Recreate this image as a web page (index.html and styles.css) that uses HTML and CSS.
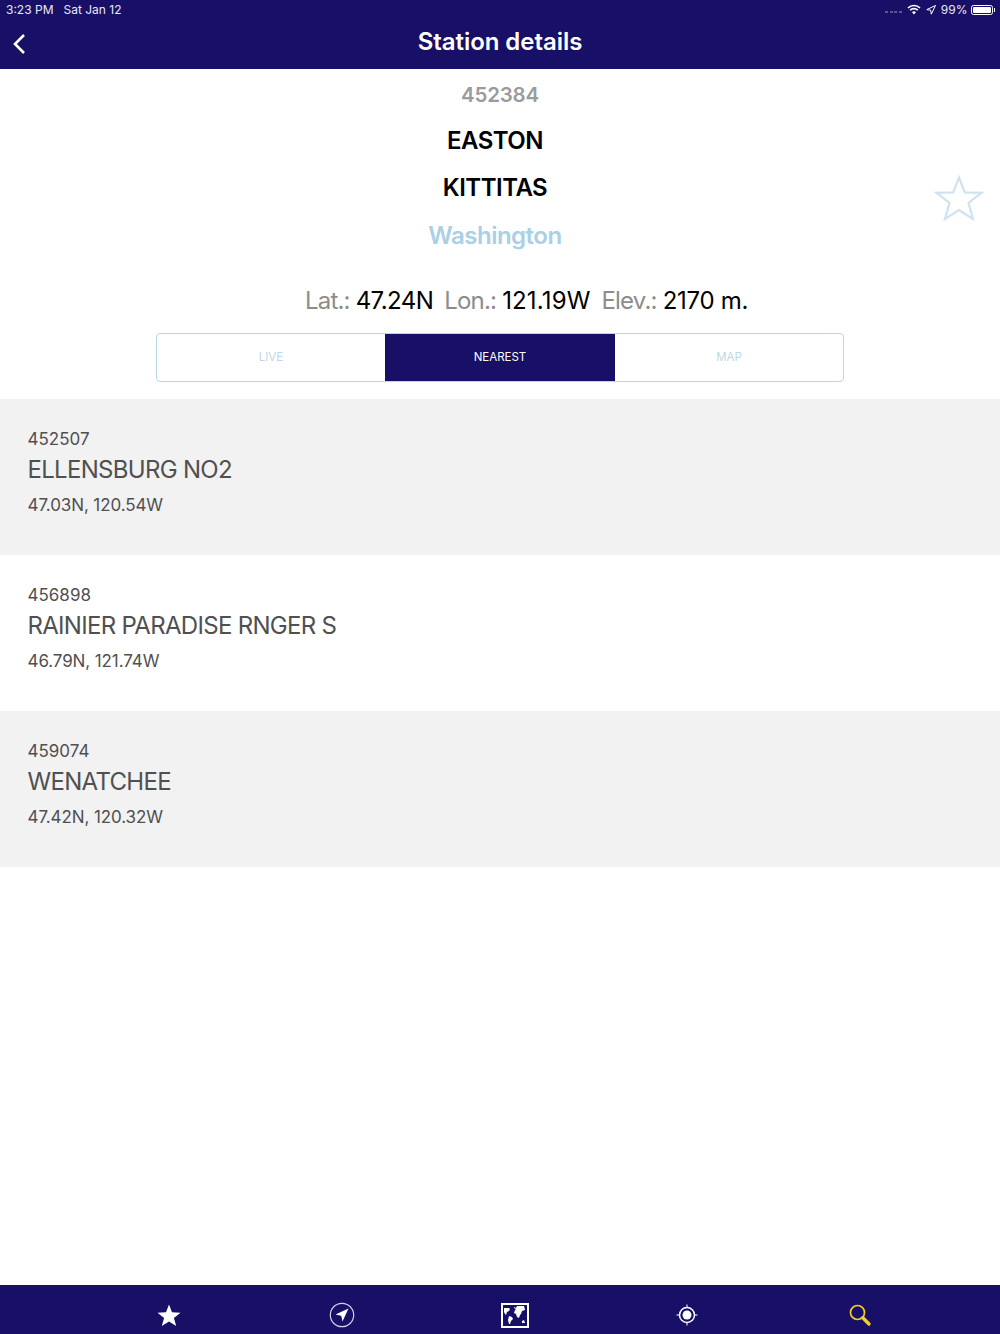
FILE: index.html
```html
<!DOCTYPE html>
<html lang="en">
<head>
<meta charset="utf-8">
<title>Station details</title>
<link rel="stylesheet" href="styles.css">
</head>
<body>
<div class="app">
  <header class="header">
    <div class="status">
      <div class="status-left"><span>3:23 PM</span><span>Sat Jan 12</span></div>
      <div class="status-right">
        <span class="signal"><i></i><i></i><i></i><i></i></span>
        <svg class="wifi" width="14" height="11" viewBox="0 0 14 11"><path d="M1 4a8.500 8.500 0 0 1 12 0M3.200 6.200a5.400 5.400 0 0 1 7.600 0" fill="none" stroke="#fff" stroke-width="1.700"/><path d="M5 8.200a2.800 2.800 0 0 1 4 0L7 10.400z" fill="#fff"/></svg>
        <svg class="loc" width="10" height="10" viewBox="0 0 10 10"><path d="M9.500.5 .8 4.600l3.900.6.6 4z" fill="none" stroke="#fff" stroke-width="1"/></svg>
        <span class="pct">99%</span>
        <span class="battery"><span class="battery-fill"></span></span><span class="battery-cap"></span>
      </div>
    </div>
    <div class="nav">
      <svg class="back" width="14" height="22" viewBox="0 0 14 22"><path d="M12 2 3 11l9 9" fill="none" stroke="#fff" stroke-width="2.600"/></svg>
      <h1 class="title">Station details</h1>
    </div>
  </header>

  <main class="main">
    <section class="station">
      <div class="station-id">452384</div>
      <div class="station-names">
        <div class="station-name">EASTON</div>
        <div class="station-name">KITTITAS</div>
        <div class="station-state">Washington</div>
      </div>
      <svg class="fav" width="50" height="46" viewBox="0 0 50 46"><path d="M25 2.500 30.800 17.300 47.500 17.800 34.500 28 39 44 25 35 11 44 15.500 28 2.500 17.800 19.200 17.300z" fill="none" stroke="#cfe3ef" stroke-width="2.200"/></svg>
      <div class="coords">
        <span><span class="label">Lat.: </span>47.24N</span>
        <span><span class="label">Lon.: </span><span class="val-wide">121.19W</span></span>
        <span><span class="label">Elev.: </span><span class="val-mid">2170 m.</span></span>
      </div>
      <div class="tabs">
        <div class="tab">LIVE</div>
        <div class="tab tab-active">NEAREST</div>
        <div class="tab">MAP</div>
      </div>
    </section>

    <section class="list">
      <article class="row row-alt">
        <div class="row-id">452507</div>
        <div class="row-name">ELLENSBURG NO2</div>
        <div class="row-pos">47.03N, 120.54W</div>
      </article>
      <article class="row">
        <div class="row-id">456898</div>
        <div class="row-name">RAINIER PARADISE RNGER S</div>
        <div class="row-pos">46.79N, 121.74W</div>
      </article>
      <article class="row row-alt">
        <div class="row-id">459074</div>
        <div class="row-name">WENATCHEE</div>
        <div class="row-pos">47.42N, 120.32W</div>
      </article>
    </section>
  </main>

  <footer class="tabbar">
    <svg width="24" height="24" viewBox="0 0 24 24"><path d="M12 1.500 15 9.200 23.500 9.700 16.900 15 19.200 23 12 18.500 4.800 23 7.100 15 .5 9.700 9 9.200z" fill="#fff"/></svg>
    <svg width="26" height="26" viewBox="0 0 26 26"><circle cx="13" cy="13" r="11.700" fill="none" stroke="#d5d3e6" stroke-width="1.200"/><path d="M19.500 6.500 6.500 12.500 12.200 13.800 13.500 19.500z" fill="#fff"/></svg>
    <svg width="28" height="25" viewBox="0 0 28 25"><rect x="1" y="1" width="26" height="23" fill="none" stroke="#fff" stroke-width="2"/><path d="M3 5h5l1 1-1 2-2 1-1 3-1-1-1-2zM8 13l3 1 1 2-2 2-1 3h-1l-1-4zM13 4l2 1 1-2 7 0 1 4-3 1-1 3-1 1-1 3-2-1-1-3-2-1 1-3 1-1-2-1zM21 18l2-1 1 3h-3z" fill="#fff"/></svg>
    <svg width="24" height="24" viewBox="0 0 24 24"><circle cx="12" cy="12" r="7.500" fill="none" stroke="#fff" stroke-width="1.500"/><circle cx="12" cy="12" r="4.500" fill="#fff"/><path d="M12 1.500v3.500M12 19v3.500M1.500 12H5M19 12h3.500" stroke="#fff" stroke-width="1"/></svg>
    <svg width="24" height="24" viewBox="0 0 24 24"><circle cx="9.500" cy="9.500" r="7" fill="none" stroke="#f5d020" stroke-width="1.700"/><path d="M14.800 14.800 21 21" stroke="#f5d020" stroke-width="3.400" stroke-linecap="round"/></svg>
  </footer>
</div>
</body>
</html>
```

FILE: styles.css
```css
* { box-sizing: border-box; }
html, body { margin: 0; padding: 0; }
body { font-family: Inter, "Liberation Sans", sans-serif; background: #fff; }
.app { width: 1000px; height: 1334px; display: flex; flex-direction: column; overflow: hidden; }

.header { height: 69px; background: #171066; color: #fff; flex: none; }
.status { height: 20px; display: flex; justify-content: space-between; align-items: center; padding: 0 5px 1px 6px; font-size: 12px; color: #e9e8f3; }
.status-left { display: flex; gap: 10px; }
.status-right { display: flex; align-items: center; }
.signal { display: flex; gap: 1.500px; margin-right: 5px; margin-top: 4px; }
.signal i { width: 3px; height: 2px; background: #5b5690; }
.wifi { margin-right: 5px; }
.loc { margin-right: 5px; }
.pct { margin-right: 3px; }
.battery { width: 22px; height: 10px; border: 1px solid #fff; border-radius: 2.500px; padding: 1px; display: block; }
.battery-fill { display: block; height: 100%; background: #fff; border-radius: 1px; }
.battery-cap { width: 1.500px; height: 4px; background: #fff; margin-left: 1px; }
.nav { height: 49px; position: relative; display: flex; align-items: center; justify-content: center; }
.back { position: absolute; left: 12px; top: 13px; }
.title { margin: 0 0 6px; font-size: 24px; font-weight: 600; line-height: 32px; letter-spacing: -.05px; }

.main { flex: 1; }
.station { position: relative; padding-top: 13px; display: flex; flex-direction: column; align-items: center; }
.station-id { font-size: 20.500px; font-weight: 600; line-height: 26px; color: #9b9b9b; letter-spacing: -.2px; }
.station-names { padding-right: 10px; padding-top: 19px; display: flex; flex-direction: column; align-items: center; gap: 19.300px; }
.station-name { font-size: 24px; font-weight: 600; line-height: 28px; color: #000; letter-spacing: -.5px; }
.station-state { font-size: 24px; font-weight: 600; line-height: 28px; color: #a9d0e4; letter-spacing: -.5px; }
.fav { position: absolute; right: 16px; top: 106px; }
.coords { display: flex; gap: 11px; margin-top: 37.500px; padding-left: 53px; font-size: 24px; line-height: 28px; color: #000; letter-spacing: -.55px; }
.label { color: #8c8c8c; letter-spacing: -.8px; }
.val-wide { letter-spacing: .15px; }
.val-mid { letter-spacing: -.3px; }
.tabs { width: 688px; height: 49px; margin-top: 17.500px; display: grid; grid-template-columns: 1fr 230px 1fr; border: 1.500px solid #b9d7e9; border-radius: 4px; overflow: hidden; }
.tab { display: flex; align-items: center; justify-content: center; font-size: 11.500px; color: #bcd8e8; }
.tab-active { background: #171066; color: #fff; }

.list { margin-top: 17px; }
.row { height: 156px; padding: 28px 27.500px 0; color: #505050; }
.row-alt { background: #f2f2f2; }
.row-id { font-size: 17px; line-height: 24px; }
.row-name { font-size: 24px; line-height: 30px; margin-top: 4px; letter-spacing: -.7px; }
.row-pos { font-size: 17px; line-height: 24px; margin-top: 8.500px; letter-spacing: -.1px; }

.tabbar { height: 49px; background: #171066; flex: none; display: grid; grid-template-columns: repeat(5, 172.600px); justify-content: center; justify-items: center; align-items: center; padding: 11px 0 0 29px; }
```
